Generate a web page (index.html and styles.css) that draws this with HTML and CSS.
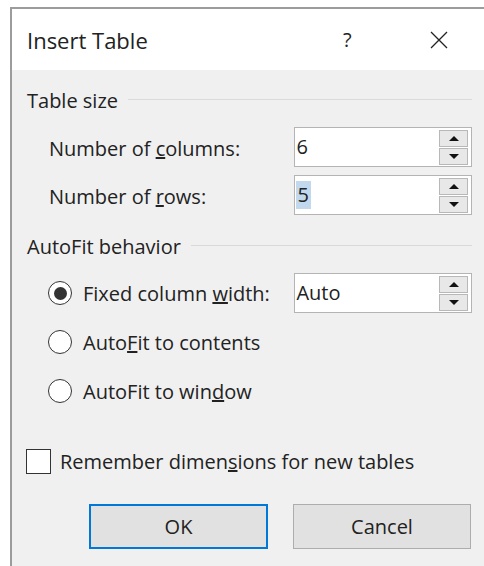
FILE: index.html
```html
<!DOCTYPE html>
<html lang="en">
<head>
<meta charset="utf-8">
<title>Insert Table</title>
<link rel="stylesheet" href="styles.css">
</head>
<body>
<div class="dialog">
  <div class="titlebar">
    <span class="title">Insert Table</span>
    <span class="help">?</span>
    <span class="close">
      <svg width="18" height="18" viewBox="0 0 18 18"><path d="M1 1 L17 17 M17 1 L1 17" stroke="#222" stroke-width="1.3" fill="none"/></svg>
    </span>
  </div>
  <div class="content">
    <div class="group-head"><span>Table size</span><i class="rule"></i></div>
    <div class="field-row">
      <label class="field-label">Number of <u>c</u>olumns:</label>
      <div class="spin">
        <span class="spin-value">6</span>
        <div class="spin-buttons">
          <span class="spin-btn"><i class="tri-up"></i></span>
          <span class="spin-btn"><i class="tri-down"></i></span>
        </div>
      </div>
    </div>
    <div class="field-row second">
      <label class="field-label">Number of <u>r</u>ows:</label>
      <div class="spin">
        <span class="spin-value"><span class="selected">5</span></span>
        <div class="spin-buttons">
          <span class="spin-btn"><i class="tri-up"></i></span>
          <span class="spin-btn"><i class="tri-down"></i></span>
        </div>
      </div>
    </div>

    <div class="group-head autofit"><span>AutoFit behavior</span><i class="rule"></i></div>
    <div class="options">
      <div class="option-row">
        <label class="radio-label"><span class="radio checked"></span><span>Fixed column <u>w</u>idth:</span></label>
        <div class="spin">
          <span class="spin-value">Auto</span>
          <div class="spin-buttons">
            <span class="spin-btn"><i class="tri-up"></i></span>
            <span class="spin-btn"><i class="tri-down"></i></span>
          </div>
        </div>
      </div>
      <div class="option-row">
        <label class="radio-label"><span class="radio"></span><span>Auto<u>F</u>it to contents</span></label>
      </div>
      <div class="option-row">
        <label class="radio-label"><span class="radio"></span><span>AutoFit to win<u>d</u>ow</span></label>
      </div>
    </div>

    <div class="check-row">
      <span class="checkbox"></span>
      <span>Remember dimen<u>s</u>ions for new tables</span>
    </div>

    <div class="buttons">
      <button class="btn default">OK</button>
      <button class="btn">Cancel</button>
    </div>
  </div>
</div>
</body>
</html>
```
FILE: styles.css
```css
html, body {
  margin: 0;
  padding: 0;
  background: #ffffff;
  overflow: hidden;
}

body {
  font-family: "Open Sans", "Noto Sans", sans-serif;
  font-size: 20px;
  color: #222222;
}

.dialog {
  margin: 7px 0 0 10px;
  width: 490px;
  height: 557px;
  border-top: 2px solid #9c9c9c;
  border-left: 2px solid #9c9c9c;
  background: #f0f0f0;
}

/* title bar */
.titlebar {
  height: 61px;
  background: #ffffff;
  display: flex;
  align-items: center;
  padding-left: 15px;
}

.title {
  width: 316px;
  font-size: 22px;
}

.help {
  width: 87px;
  font-size: 20px;
}

.close {
  display: flex;
  align-items: center;
}

/* body */
.content {
  width: 445px;
  padding: 17px 0 0 15px;
}

.group-head {
  height: 26px;
  display: flex;
  align-items: center;
  gap: 10px;
}

.group-head .rule {
  flex: 1;
  height: 1px;
  background: #dadada;
  margin-top: -1px;
}

.group-head.autofit {
  margin-top: 18px;
}

.field-row {
  display: flex;
  align-items: center;
  height: 40px;
  margin-top: 14px;
  padding-left: 22px;
}

.field-row.second {
  margin-top: 8px;
}

.field-label {
  width: 246px;
  padding-top: 3px;
}

/* spin box */
.spin {
  box-sizing: border-box;
  width: 178px;
  height: 40px;
  background: #ffffff;
  border: 1px solid #b4b4b4;
  display: flex;
  align-items: center;
  justify-content: space-between;
  padding: 0 3px 0 1px;
}

.spin-value {
  line-height: 28px;
}

.selected {
  background: #c2d9ed;
  display: inline-block;
  padding: 0 2px 0 1px;
}

.spin-buttons {
  display: flex;
  flex-direction: column;
  gap: 1px;
}

.spin-btn {
  box-sizing: border-box;
  width: 29px;
  height: 17px;
  background: #e8e8e8;
  border: 1px solid #b8b8b8;
  display: flex;
  align-items: center;
  justify-content: center;
}

.tri-up, .tri-down {
  width: 0;
  height: 0;
  border-left: 5px solid transparent;
  border-right: 5px solid transparent;
}

.tri-up {
  border-bottom: 5px solid #111;
}

.tri-down {
  border-top: 5px solid #111;
}

/* radio options */
.options {
  margin-top: 14px;
  padding-left: 21px;
  display: flex;
  flex-direction: column;
  gap: 9px;
}

.option-row {
  height: 40px;
  display: flex;
  align-items: center;
}

.radio-label {
  display: flex;
  align-items: center;
  gap: 11px;
  width: 247px;
  white-space: nowrap;
}

.radio {
  flex: none;
  box-sizing: border-box;
  width: 24px;
  height: 24px;
  border-radius: 50%;
  border: 1.5px solid #333;
  background: #fff;
  display: flex;
  align-items: center;
  justify-content: center;
}

.radio.checked::after {
  content: "";
  width: 13px;
  height: 13px;
  border-radius: 50%;
  background: #333;
}

/* checkbox */
.check-row {
  margin-top: 30px;
  margin-left: -1px;
  height: 40px;
  display: flex;
  align-items: center;
  gap: 9px;
  white-space: nowrap;
}

.checkbox {
  flex: none;
  box-sizing: border-box;
  width: 25px;
  height: 25px;
  border: 1.5px solid #333;
  background: #fff;
}

/* buttons */
.buttons {
  margin-top: 23px;
  display: flex;
  justify-content: flex-end;
  gap: 25px;
  padding-right: 1px;
}

.btn {
  box-sizing: border-box;
  width: 178px;
  height: 45px;
  background: #e1e1e1;
  border: 1px solid #adadad;
  font: inherit;
  color: #222222;
  padding: 0;
}

.btn.default {
  width: 179px;
  border: 2px solid #0078d7;
}
```
